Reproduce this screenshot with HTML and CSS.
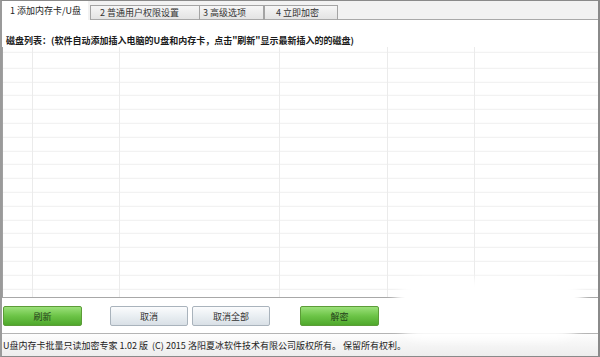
FILE: index.html
```html
<!DOCTYPE html>
<html lang="zh-CN">
<head>
  <meta charset="UTF-8" />
  <title>U盘内存卡批量只读加密专家</title>
  <link rel="stylesheet" href="styles.css">
</head>
<body>
  <div class="window">
    <!-- Tab strip -->
    <div class="tabs">
      <div class="tab active">1 添加内存卡/U盘</div>
      <div class="tab tab2">2 普通用户权限设置</div>
      <div class="tab tab3">3 高级选项</div>
      <div class="tab tab4">4 立即加密</div>
      <div class="tab-rest"></div>
    </div>

    <!-- Tab page -->
    <div class="page">
      <div class="label">磁盘列表：(软件自动添加插入电脑的U盘和内存卡，点击"刷新"显示最新插入的的磁盘)</div>
      <div class="listview">
        <div class="col c1"></div>
        <div class="col c2"></div>
        <div class="col c3"></div>
        <div class="col c4"></div>
        <div class="col c5"></div>
        <div class="col c6"></div>
      </div>
      <div class="buttons">
        <button class="btn green">刷新</button>
        <button class="btn gray cancel">取消</button>
        <button class="btn gray cancel-all">取消全部</button>
        <button class="btn green decrypt">解密</button>
      </div>
    </div>

    <!-- Status bar -->
    <div class="status">U盘内存卡批量只读加密专家 1.02 版&nbsp; (C) 2015 洛阳夏冰软件技术有限公司版权所有。 保留所有权利。</div>

    <!-- faded patch over the lower right corner -->
    <div class="blot"></div>
  </div>
</body>
</html>
```

FILE: styles.css
```css
* {
  box-sizing: border-box;
  margin: 0;
  padding: 0;
}
body {
  background: #fff;
  font-family: "Noto Sans CJK SC", "Liberation Sans", sans-serif;
  font-size: 9px;
  color: #222;
}
.window {
  position: relative;
  width: 600px;
  height: 357px;
  border: 1px solid #8a8a8a;
  border-left: 2px solid #9a9a9a;
  border-right: 2px solid #8a8a8a;
  background: #fff;
  display: flex;
  flex-direction: column;
  overflow: hidden;
}
/* Tabs */
.tabs {
  display: flex;
  align-items: flex-end;
  height: 19px;
  background: #f2f2f2;
}
.tab {
  height: 15px;
  line-height: 13px;
  border: 1px solid #a4a4a4;
  border-bottom: none;
  background: linear-gradient(#f6f6f6, #e2e2e2);
  color: #333;
  white-space: nowrap;
}
.tab.active {
  width: 86px;
  height: 19px;
  line-height: 19px;
  border: none;
  background: #fff;
  padding-left: 8px;
  color: #222;
}
.tab2 {
  width: 110px;
  margin-left: 2px;
  padding-left: 9px;
}
.tab3 {
  width: 64px;
  border-left: none;
  padding-left: 3px;
}
.tab4 {
  width: 74px;
  padding-left: 11px;
}
.tab-rest {
  flex: 1;
  height: 19px;
}
.tabs .tab:not(.active), .tab-rest {
  box-shadow: inset 0 -1px 0 #a9a9a9;
}
/* Page */
.page {
  flex: 1;
  display: flex;
  flex-direction: column;
  border-bottom: 1px solid #b4b4b4;
}
.label {
  margin: 14px 0 0 4px;
  height: 13px;
  line-height: 13px;
  font-weight: bold;
  color: #1a1a1a;
  white-space: nowrap;
}
.listview {
  display: flex;
  height: 251px;
  margin-left: 0;
  border-left: 1px solid #a0a0a0;
  border-bottom: 1px solid #a8a8a8;
  background: repeating-linear-gradient(to bottom, transparent 0, transparent 12.8px, #efefef 12.8px, #efefef 13.8px);
  background-position: 0 7.8px;
}
.col {
  border-right: 1px solid #ebebeb;
}
.c1 { width: 30px; }
.c2 { width: 87px; }
.c3 { width: 160px; }
.c4 { width: 108px; }
.c5 { width: 87px; }
.c6 { flex: 1; border-right: none; }
/* Buttons */
.buttons {
  display: flex;
  margin-top: 8px;
  padding-left: 1px;
}
.btn {
  width: 79px;
  height: 20px;
  font-family: inherit;
  font-size: 9px;
  border-radius: 2px;
  cursor: pointer;
}
.btn.green {
  border: 1px solid #5c9c38;
  background: linear-gradient(#9be07a, #6cc447 50%, #4fa82c);
  color: #24401a;
}
.btn.gray {
  width: 78px;
  border: 1px solid #a9b3bc;
  background: linear-gradient(#fbfcfd, #e9eef2 50%, #d9e0e6);
  color: #333;
}
.cancel { margin-left: 28px; }
.cancel-all { margin-left: 4px; }
.decrypt { margin-left: 30px; }
/* Status bar */
.status {
  height: 22px;
  line-height: 24px;
  padding-left: 1px;
  background: linear-gradient(#fdfdfd, #ededed);
  color: #222;
  white-space: nowrap;
}
.blot {
  position: absolute;
  left: 400px;
  top: 286px;
  width: 175px;
  height: 44px;
  background: #fff;
  border-radius: 20px;
  box-shadow: 0 0 10px 8px #fff;
}
```
